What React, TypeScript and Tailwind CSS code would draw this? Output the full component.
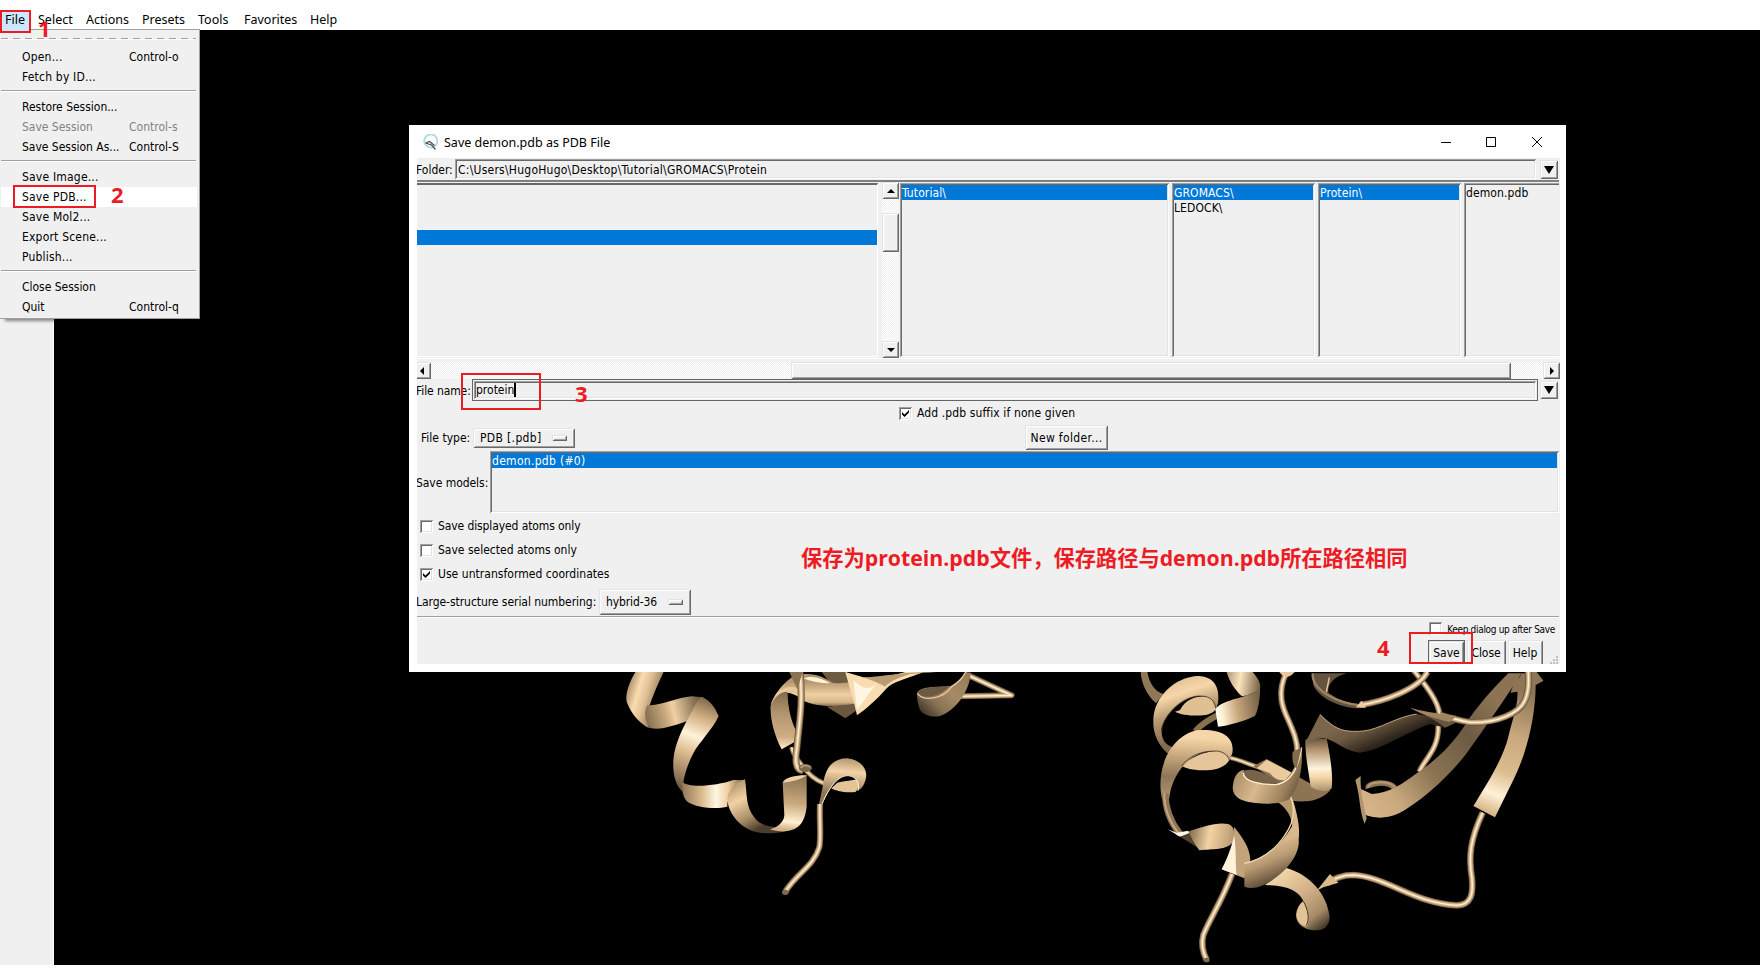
import React from "react";

const sunken = "shadow-[inset_1px_1px_#a0a0a0,inset_-1px_-1px_#ffffff,inset_2px_2px_#696969,inset_-2px_-2px_#e3e3e3]";
const raised = "shadow-[inset_1px_1px_#e3e3e3,inset_-1px_-1px_#696969,inset_2px_2px_#ffffff,inset_-2px_-2px_#a0a0a0]";
const trough = "bg-[repeating-conic-gradient(#ffffff_0_25%,#f0f0f0_0_50%)] bg-[length:2px_2px]";

type Entry = { label?: string; key?: string; off?: boolean; hot?: boolean };

const fileMenu: Entry[] = [
  { label: "Open...", key: "Control-o" },
  { label: "Fetch by ID..." },
  {},
  { label: "Restore Session..." },
  { label: "Save Session", key: "Control-s", off: true },
  { label: "Save Session As...", key: "Control-S" },
  {},
  { label: "Save Image..." },
  { label: "Save PDB...", hot: true },
  { label: "Save Mol2..." },
  { label: "Export Scene..." },
  { label: "Publish..." },
  {},
  { label: "Close Session" },
  { label: "Quit", key: "Control-q" },
];

function MenuBar() {
  return (
    <div className="flex h-[30px] bg-white pt-[10px] font-['Noto_Sans','Noto_Sans_CJK_SC',sans-serif] text-[12.5px] leading-[19px]">
      <div className="w-[38px]" />
      <div className="w-[48px]">Select</div>
      <div className="w-[56px]">Actions</div>
      <div className="w-[56px]">Presets</div>
      <div className="w-[46px]">Tools</div>
      <div className="w-[66px]">Favorites</div>
      <div>Help</div>
    </div>
  );
}

function FileMenu() {
  return (
    <div className="absolute left-0 top-[29px] flex h-[290px] w-[200px] flex-col border-r border-b border-t border-[#a0a0a0] bg-[#f0f0f0] shadow-[4px_3px_3px_-1px_rgba(0,0,0,0.45)]">
      <div className="ml-px mt-[8px] h-px w-[195px] bg-[repeating-linear-gradient(90deg,#a0a0a0_0_7px,#f0f0f0_7px_12px)]" />
      <div className="ml-px h-px w-[195px] bg-white" />
      <div className="h-[7px]" />
      {fileMenu.map((e, i) =>
        e.label ? (
          <div
            key={i}
            className={`mx-px flex h-[20px] w-[196px] items-center pl-[21px] ${e.hot ? "bg-white" : ""} ${e.off ? "text-[#838383]" : "text-black"}`}
          >
            <span className={`w-[107px] whitespace-nowrap ${e.label.endsWith("...") && e.label.length < 17 ? "tracking-[0.2px]" : "tracking-[-0.02px]"}`}>
              {e.label}
            </span>
            <span className="whitespace-nowrap">{e.key}</span>
          </div>
        ) : (
          <div key={i} className="ml-px flex h-[10px] w-[195px] items-start pt-[3px]">
            <div className="h-[2px] w-full border-b border-white bg-[#a0a0a0]" />
          </div>
        ),
      )}
    </div>
  );
}

function Arrow({ dir, big }: { dir: "up" | "down" | "left" | "right"; big?: boolean }) {
  const d = {
    up: "M0 6L4 2L8 6Z",
    down: "M0 2L4 6L8 2Z",
    left: "M6 0L2 4L6 8Z",
    right: "M2 0L6 4L2 8Z",
  }[dir];
  return (
    <svg viewBox="0 0 8 8" className={big ? "h-[8px] w-[10px]" : "h-[8px] w-[8px]"} preserveAspectRatio="none">
      <path d={big ? "M0 0H8L4 8Z" : d} fill="#000" />
    </svg>
  );
}

function Check({ on }: { on?: boolean }) {
  return (
    <div className={`flex h-[13px] w-[13px] shrink-0 items-center justify-center bg-white ${sunken}`}>
      {on && (
        <svg viewBox="0 0 7 7" className="h-[7px] w-[7px]">
          <path d="M0 2L2.5 4.5L7 0V2.6L2.5 7L0 4.6Z" fill="#000" />
        </svg>
      )}
    </div>
  );
}

function MenuMark() {
  return <div className={`h-[6px] w-[15px] shrink-0 bg-[#f0f0f0] ${raised}`} />;
}

function List({ items, width, sel }: { items: string[]; width: string; sel?: number }) {
  return (
    <div className={`h-[174px] shrink-0 p-[2px] ${sunken} ${width}`}>
      {items.map((t, i) => (
        <div key={t} className={`h-[15px] leading-[16px] tracking-[0.1px] ${sel === i ? "bg-[#0078d7] text-white" : ""}`}>
          {t}
        </div>
      ))}
    </div>
  );
}

function SaveDialog() {
  return (
    <div className="absolute left-[409px] top-[125px] flex h-[547px] w-[1157px] flex-col bg-white">
      <div className="flex h-[33px] shrink-0 items-center pl-[14px] pr-[23px]">
        <svg viewBox="0 0 16 16" className="h-[16px] w-[16px]" fill="none">
          <circle cx="7.800" cy="7" r="6.600" stroke="#b3d7e8" strokeWidth="1.900" />
          <path d="M2.500 9L6.500 7.500L11.500 11.500M2.500 9L8.500 11L12.500 15.500" stroke="#4a4a4a" strokeWidth="1.200" />
        </svg>
        <span className="ml-[5px] mt-[2px] whitespace-nowrap font-['Noto_Sans','Noto_Sans_CJK_SC',sans-serif] text-[12.5px]">Save demon.pdb as PDB File</span>
        <svg viewBox="0 0 102 12" className="ml-auto h-[12px] w-[102px]" fill="none" stroke="#000">
          <path d="M0 6.5H10M45.500 1.500H54.500V10.500H45.500ZM91 1L101 11M101 1L91 11" />
        </svg>
      </div>
      <div className="ml-[8px] flex h-[506px] w-[1143px] flex-col overflow-hidden bg-[#f0f0f0]">
        <div className="flex h-[22px] shrink-0 items-start pt-px">
          <span className="-ml-px w-[39px] shrink-0 leading-[22px]">Folder:</span>
          <div className={`h-[20px] w-[1081px] pl-[3px] leading-[22px] ${sunken}`}>
            <span className="tracking-[0.24px]">C:\Users\HugoHugo\Desktop\Tutorial\GROMACS\Protein</span>
          </div>
          <div className={`ml-[4px] mt-px flex h-[19px] w-[18px] shrink-0 items-center justify-center ${raised}`}>
            <Arrow dir="down" big />
          </div>
        </div>
        <div className="flex h-[179px] w-[1142px] shrink-0 overflow-hidden border-b border-t-2 border-b-white border-t-[#808080] pt-px">
          <div className="h-[174px] w-[461px] shrink-0 border-b border-t-2 border-r border-b-white border-r-white border-t-[#696969] pt-[45px]">
            <div className="h-[15px] w-[460px] bg-[#0078d7]" />
          </div>
          <div className={`ml-[4px] flex h-[175px] w-[17px] shrink-0 flex-col ${trough}`}>
            <div className={`-mt-px flex h-[17px] items-center justify-center bg-[#f0f0f0] ${raised}`}><Arrow dir="up" /></div>
            <div className={`mt-[14px] h-[39px] bg-[#f0f0f0] ${raised}`} />
            <div className={`mt-auto flex h-[17px] items-center justify-center bg-[#f0f0f0] ${raised}`}><Arrow dir="down" /></div>
          </div>
          <div className="ml-px flex shrink-0 gap-[3px]">
            <List width="w-[269px]" items={["Tutorial\\"]} sel={0} />
            <List width="w-[143px]" items={["GROMACS\\", "LEDOCK\\"]} sel={0} />
            <List width="w-[143px]" items={["Protein\\"]} sel={0} />
            <List width="w-[110px]" items={["demon.pdb"]} />
          </div>
        </div>
        <div className={`mt-[3px] flex h-[17px] shrink-0 ${trough}`}>
          <div className={`-ml-[3px] flex h-[17px] w-[17px] shrink-0 items-center justify-center bg-[#f0f0f0] pr-px ${raised}`}><Arrow dir="left" /></div>
          <div className={`ml-[360px] h-[17px] w-[720px] bg-[#f0f0f0] ${raised}`} />
          <div className={`ml-auto flex h-[17px] w-[17px] items-center justify-center bg-[#f0f0f0] ${raised}`}><Arrow dir="right" /></div>
        </div>
        <div className="flex h-[22px] shrink-0">
          <span className="-ml-px w-[56px] shrink-0 whitespace-nowrap leading-[24px] tracking-[-0.1px]">File name:</span>
          <div className="h-[22px] w-[1066px] border border-[#646464] p-px">
            <div className={`flex h-[18px] items-center pl-[2px] ${sunken}`}>
              <span className="pt-px">protein</span>
              <div className="h-[14px] w-[2px] bg-black" />
            </div>
          </div>
          <div className={`ml-[2px] mt-[2px] flex h-[18px] w-[18px] shrink-0 items-center justify-center ${raised}`}>
            <Arrow dir="down" big />
          </div>
        </div>
        <div className="flex h-[24px] shrink-0 items-center pl-[482px]">
          <Check on />
          <span className="ml-[5px] pt-px tracking-[0.11px]">Add .pdb suffix if none given</span>
        </div>
        <div className="flex h-[25px] shrink-0 items-center pl-[4px]">
          <span className="w-[52px] whitespace-nowrap pt-px">File type:</span>
          <div className={`flex h-[20px] w-[102px] items-center justify-between pl-[7px] pr-[8px] ${raised}`}>
            <span className="pt-px tracking-[0.35px]">PDB [.pdb]</span>
            <MenuMark />
          </div>
          <div className={`ml-[450px] flex h-[25px] w-[83px] items-center justify-center pt-[2px] tracking-[0.35px] ${raised}`}>New folder...</div>
        </div>
        <div className="mt-px flex h-[62px] shrink-0 items-center">
          <span className="-ml-px w-[74px] shrink-0 whitespace-nowrap pt-[2px] tracking-[-0.05px]">Save models:</span>
          <div className={`h-[62px] w-[1069px] p-[2px] ${sunken}`}>
            <div className="h-[15px] bg-[#0078d7] leading-[16px] tracking-[0.3px] text-white">demon.pdb (#0)</div>
          </div>
        </div>
        <div className="flex h-[75px] shrink-0 flex-col pl-[3px] pt-px">
          <div className="flex h-[24px] items-center gap-[5px]"><Check /><span className="tracking-[-0.1px]">Save displayed atoms only</span></div>
          <div className="flex h-[24px] items-center gap-[5px]"><Check /><span>Save selected atoms only</span></div>
          <div className="flex h-[24px] items-center gap-[5px]"><Check on /><span className="pt-px tracking-[0.04px]">Use untransformed coordinates</span></div>
        </div>
        <div className="flex h-[27px] shrink-0 items-center">
          <span className="-ml-px w-[183px] shrink-0 whitespace-nowrap pt-px tracking-[-0.05px]">Large-structure serial numbering:</span>
          <div className={`flex h-[26px] w-[92px] items-center justify-between pl-[7px] pr-[8px] ${raised}`}>
            <span className="pt-px tracking-[-0.1px]">hybrid-36</span>
            <MenuMark />
          </div>
        </div>
        <div className="mt-px h-[2px] w-[1142px] shrink-0 border-b border-white bg-[#a0a0a0]" />
        <div className="flex h-[22px] shrink-0 items-start justify-end pr-[5px] pt-[4px]">
          <Check />
          <span className="ml-[5px] whitespace-nowrap pt-px text-[10px] leading-[14px] tracking-[-0.32px]">Keep dialog up after Save</span>
        </div>
        <div className="flex h-[24px] shrink-0 pl-[1011px]">
          <div className="h-[30px] w-[37px] border border-[#646464]">
            <div className={`flex h-[28px] items-center justify-center pb-[4px] ${raised}`}>Save</div>
          </div>
          <div className={`ml-[2px] flex h-[30px] w-[39px] items-center justify-center pb-[4px] pr-px tracking-[-0.1px] ${raised}`}>Close</div>
          <div className={`ml-[2px] flex h-[30px] w-[35px] items-center justify-center pb-[4px] pr-px ${raised}`}>Help</div>
          <svg viewBox="0 0 8 8" className="ml-[7px] mt-[16px] h-[8px] w-[8px]" fill="#bfbfbf">
            <path d="M6 0h2v2h-2zM3 3h2v2h-2zM6 3h2v2h-2zM0 6h2v2h-2zM3 6h2v2h-2zM6 6h2v2h-2z" />
          </svg>
        </div>
      </div>
    </div>
  );
}

function Coil({ d, w = 18 }: { d: string; w?: number }) {
  return (
    <g fill="none" strokeLinecap="butt" strokeLinejoin="round">
      <path d={d} stroke="#5f4f3b" strokeWidth={w} />
      <path d={d} stroke="#a98c68" strokeWidth={w * 0.8} />
      <path d={d} stroke="#d9b98e" strokeWidth={w * 0.52} />
      <path d={d} stroke="#fff0d6" strokeWidth={w * 0.2} />
    </g>
  );
}

function Grad({ id, a, stops }: { id: string; a: [number, number, number, number]; stops: [number, string][] }) {
  return (
    <linearGradient id={id} gradientUnits="userSpaceOnUse" x1={a[0]} y1={a[1]} x2={a[2]} y2={a[3]}>
      {stops.map(([o, c]) => (
        <stop key={o} offset={o} stopColor={c} />
      ))}
    </linearGradient>
  );
}

function ChainLeft() {
  return (
    <g transform="translate(610 660) scale(0.33333)">
      <defs>
        <Grad id="l1" a={[50, 80, 150, 110]} stops={[[0, "#a68a66"], [0.35, "#fbdcb0"], [0.6, "#e0c094"], [1, "#8d7556"]]} />
        <Grad id="l2" a={[110, 170, 270, 130]} stops={[[0, "#8a7253"], [0.35, "#cbab80"], [0.5, "#f0d0a2"], [1, "#6f5c44"]]} />
        <Grad id="l3" a={[300, 120, 200, 380]} stops={[[0, "#7d684c"], [0.2, "#cfae82"], [0.42, "#fff2d8"], [0.62, "#dcbb8e"], [1, "#6f5b42"]]} />
        <Grad id="l4" a={[210, 400, 390, 400]} stops={[[0, "#8a7253"], [0.35, "#d9b88b"], [0.6, "#fff6e2"], [0.8, "#f0d0a2"], [1, "#917858"]]} />
        <Grad id="l5" a={[370, 380, 440, 510]} stops={[[0, "#bf9f76"], [0.3, "#f2d2a4"], [0.7, "#a98d68"], [1, "#4b3e2e"]]} />
        <Grad id="l6" a={[560, 350, 540, 510]} stops={[[0, "#8d7555"], [0.5, "#c9a97e"], [0.85, "#fff0d2"], [1, "#d3b286"]]} />
        <Grad id="l7" a={[520, 90, 510, 265]} stops={[[0, "#7d6749"], [0.4, "#b29570"], [0.8, "#cfae83"], [1, "#ffe9c6"]]} />
        <Grad id="l8" a={[640, 65, 640, 142]} stops={[[0, "#b4966e"], [0.5, "#f0d0a2"], [0.8, "#d6b58a"], [1, "#6a573f"]]} />
        <Grad id="l9" a={[1070, 40, 940, 170]} stops={[[0, "#947b5b"], [0.4, "#a78b67"], [0.7, "#8a7354"], [1, "#3c3225"]]} />
        <Grad id="l10" a={[700, 290, 690, 400]} stops={[[0, "#ad906b"], [0.4, "#f4d4a7"], [1, "#8f7656"]]} />
      </defs>
      <path d="M80 30C60 60 45 100 50 125C65 165 90 190 118 205C108 180 108 160 116 145C128 108 142 75 160 38V30Z" fill="url(#l1)" />
      <path d="M112 135C150 140 200 112 245 109L280 112C270 140 245 165 230 184C195 195 155 212 120 204C102 185 102 150 112 135Z" fill="url(#l2)" />
      <path d="M275 110C300 120 315 142 326 168C310 205 265 250 250 280C235 310 218 350 218 395C195 375 188 340 190 300C194 250 220 200 245 155C255 135 262 120 275 110Z" fill="url(#l3)" />
      <path d="M218 366C235 385 320 378 370 360L405 360C375 385 350 410 352 440C320 448 260 444 232 425C218 412 214 385 218 366Z" fill="url(#l4)" />
      <path d="M405 358C412 400 405 440 435 475C450 495 485 505 515 500L560 498C540 518 480 524 440 517C395 507 350 460 352 410C358 390 380 365 405 358Z" fill="url(#l5)" />
      <path d="M518 368C530 355 575 345 590 346V440C586 475 575 492 562 502C545 516 510 518 480 508C510 500 523 480 523 465Z" fill="url(#l6)" />
      <path d="M518 368C525 352 560 345 590 346C575 358 545 366 518 368Z" fill="#f0d1a5" />
      <path d="M635 36H710L725 75H665Z" fill="#6e5b43" />
      <path d="M555 45C610 35 640 50 668 68C690 72 705 68 720 66L735 132C700 142 620 142 580 122C535 85 500 90 482 150C480 120 510 75 555 45Z" fill="url(#l8)" />
      <path d="M580 55C610 45 635 55 660 69C635 72 605 65 580 55Z" fill="#fff1d6" />
      <path d="M482 140C485 110 510 92 533 97C532 140 545 190 560 215L555 245L515 268C495 230 480 180 482 140Z" fill="url(#l7)" />
      <path d="M482 140C490 105 535 75 575 103L578 95C545 62 490 90 482 140Z" fill="#e9ca9c" />
      <path d="M650 140L735 132L742 150L706 175Z" fill="#6a5740" />
      <path d="M706 36L760 52C800 55 860 45 885 36H940C880 60 850 65 830 85C800 120 765 150 741 166L728 112L718 80Z" fill="#f9dcb1" />
      <path d="M730 60C760 90 780 90 800 70L741 150Z" fill="#fff6e4" />
      <path d="M760 52C830 50 860 36 980 36L900 42C860 55 840 65 825 80C800 65 780 60 760 52Z" fill="#b99b74" />
      <Coil d="M1075 46L1205 106L1040 109" w={18} />
      <path d="M922 96C940 75 1000 82 1022 78C1040 68 1060 50 1067 36L1082 38C1080 90 1040 150 990 168C965 174 935 165 928 145C922 125 920 110 922 96Z" fill="url(#l9)" />
      <path d="M924 96C945 78 990 80 1018 80C990 108 940 122 924 96Z" fill="#6d5a43" />
      <path d="M922 100C940 125 1000 118 1025 80C1050 65 1060 50 1067 36" stroke="#e9c99b" strokeWidth="4" fill="none" />
      <Coil d="M545 262C550 290 565 300 575 315C600 350 620 362 642 370" w={15} />
      <Coil d="M570 36C580 130 566 200 561 262C555 300 555 330 578 332" w={21} />
      <ellipse cx="586" cy="324" rx="20" ry="12" fill="#7d684c" />
      <path d="M572 324C578 314 596 316 600 322" stroke="#c7a77c" strokeWidth="4" fill="none" />
      <path d="M538 36H578L562 88Z" fill="#8a7253" />
      <path d="M638 380C645 320 670 295 712 295C755 300 775 330 767 358C762 380 750 390 742 392C750 365 735 345 708 347C675 350 652 400 634 438H626Z" fill="url(#l10)" />
      <path d="M682 368C705 362 730 362 742 358C748 375 745 390 736 396C705 400 675 392 664 385Z" fill="#e3c497" />
      <path d="M634 438C650 395 680 345 715 347C740 350 750 370 744 392" stroke="#fff0d3" strokeWidth="3" fill="none" />
      <Coil d="M630 432C628 490 634 530 628 562C610 620 560 640 526 695" w={19} />
      <ellipse cx="526" cy="697" rx="10" ry="8" fill="#7f6a4f" />
    </g>
  );
}

function ChainRight() {
  return (
    <g transform="translate(1120 660) scale(0.33333)">
      <defs>
        <Grad id="r1" a={[120, 60, 180, 240]} stops={[[0, "#dcbb8e"], [0.3, "#f7d7a9"], [0.6, "#b89a73"], [1, "#806b4e"]]} />
        <Grad id="r2" a={[160, 230, 150, 400]} stops={[[0, "#f6d6a8"], [0.35, "#c5a57b"], [0.7, "#8e7658"], [1, "#a98c67"]]} />
        <Grad id="r3" a={[290, 40, 420, 60]} stops={[[0, "#7a654a"], [0.55, "#fbe3bd"], [1, "#7d674b"]]} />
        <Grad id="r4" a={[285, 150, 415, 130]} stops={[[0, "#ffffff"], [0.15, "#fff0d4"], [0.5, "#c8a87d"], [1, "#7a664b"]]} />
        <Grad id="r5" a={[340, 340, 520, 420]} stops={[[0, "#a88b66"], [0.4, "#d9b98d"], [0.8, "#a0845f"], [1, "#6b5840"]]} />
        <Grad id="r6" a={[600, 230, 605, 420]} stops={[[0, "#5d4c38"], [0.2, "#b1936d"], [0.5, "#fff4dc"], [0.65, "#f3d3a6"], [1, "#77634a"]]} />
        <Grad id="r7" a={[680, 190, 720, 280]} stops={[[0, "#7a664b"], [0.4, "#6c5941"], [1, "#2d251b"]]} />
        <Grad id="r8" a={[720, 440, 1130, 130]} stops={[[0, "#d7b68a"], [0.2, "#c8a87d"], [0.45, "#8c7454"], [0.75, "#6e5b43"], [1, "#8b7353"]]} />
        <Grad id="r9" a={[1230, 100, 1090, 450]} stops={[[0, "#8d7556"], [0.35, "#c7a77c"], [0.65, "#dcbb8e"], [0.85, "#fff2d8"], [1, "#d9b88b"]]} />
        <Grad id="r10" a={[210, 530, 370, 560]} stops={[[0, "#8c7455"], [0.35, "#f3d3a5"], [0.7, "#c6a67b"], [1, "#866f51"]]} />
        <Grad id="r11" a={[440, 560, 480, 660]} stops={[[0, "#d8b88c"], [0.4, "#b89a72"], [1, "#5c4b37"]]} />
        <Grad id="r12" a={[480, 630, 610, 800]} stops={[[0, "#f6d8ac"], [0.45, "#d2b186"], [0.8, "#a88c67"], [1, "#4c3e2d"]]} />
      </defs>
      <path d="M62 36H82C88 70 105 95 130 102L108 130C80 105 64 70 62 36Z" fill="#8f7758" />
      <path d="M180 150C200 110 240 105 280 110C300 140 290 160 250 166C215 168 185 165 165 155Z" fill="#dfc093" />
      <path d="M100 180C102 110 165 50 235 48C285 50 300 85 294 130L286 150C280 115 265 106 235 108C180 112 120 180 125 215C125 240 140 260 165 262L150 285C115 260 98 220 100 180Z" fill="url(#r1)" />
      <path d="M294 165C265 180 240 195 226 214" stroke="#88704f" strokeWidth="18" fill="none" />
      <path d="M185 318C220 285 260 272 305 272L332 292C320 325 280 332 245 331C220 330 195 325 185 318Z" fill="#e5c599" />
      <path d="M122 390C115 300 165 225 230 211C305 205 345 230 337 280L328 300C315 280 300 273 270 274C205 280 155 345 148 414H125Z" fill="url(#r2)" />
      <path d="M125 215C125 175 180 108 240 108C275 108 284 125 288 145M185 318C205 290 240 272 290 273C315 275 325 290 328 300" stroke="#43372a" strokeWidth="2.500" fill="none" />
      <path d="M320 36H398C420 60 425 80 418 92C390 100 385 108 365 108C345 90 328 65 320 36Z" fill="url(#r3)" />
      <path d="M286 148C310 115 390 115 420 85C420 120 415 150 405 168C370 185 325 197 294 200Z" fill="url(#r4)" />
      <Coil d="M498 40C470 100 488 145 505 180C520 215 532 240 532 275" w={19} />
      <path d="M478 36H524C510 55 490 55 478 36Z" fill="#e8c89b" />
      <Coil d="M332 294C365 300 385 315 430 325" w={14} />
      <path d="M400 318L440 297L520 340C570 375 605 385 632 390C600 425 555 428 515 422L470 365Z" fill="#8b7354" />
      <path d="M410 325L440 299L522 342C500 370 470 365 450 340Z" fill="#ebcb9e" />
      <Coil d="M880 30C930 90 975 150 955 200C955 270 915 295 898 335" w={18} />
      <path d="M556 240C570 225 610 240 620 235C630 285 640 345 635 385C620 400 585 390 572 380C565 330 555 285 556 240Z" fill="url(#r6)" />
      <path d="M600 162C645 205 665 218 730 213C780 208 830 170 890 162L970 178L975 203L930 192C850 220 780 272 720 278C680 275 650 245 620 236C600 230 575 238 556 248Z" fill="url(#r7)" />
      <path d="M600 164C645 207 665 218 730 213C780 208 830 170 890 162" stroke="#c2a37a" strokeWidth="3" fill="none" />
      <path d="M745 385C740 368 805 360 825 385" stroke="#8d7556" strokeWidth="17" fill="none" />
      <path d="M745 383C740 366 805 358 825 383" stroke="#b89a72" strokeWidth="6" fill="none" />
      <path d="M1165 40H1205C1160 110 1090 210 1040 280C970 370 880 440 830 463C790 480 750 472 732 462L718 385L755 402C810 400 850 370 890 340C950 300 1000 250 1035 195C1070 140 1120 85 1165 40Z" fill="url(#r8)" />
      <path d="M706 360L722 348C720 390 730 430 740 475L734 491C718 455 722 415 706 360Z" fill="#b29570" />
      <path d="M576 40H680C640 50 622 75 625 98C665 128 700 130 740 135L720 145C650 145 590 105 580 75Z" fill="#655440" />
      <path d="M578 40C575 95 660 130 720 136" stroke="#a0845f" strokeWidth="7" fill="none" />
      <Coil d="M720 135C790 125 895 88 922 36" w={20} />
      <path d="M708 142L725 122L738 143Z" fill="#edcda0" />
      <path d="M628 52L619 96" stroke="#eacb9e" strokeWidth="4" />
      <path d="M1185 60L1230 36H1250L1270 62L1247 75C1247 170 1220 280 1180 360L1125 472L1060 438C1115 350 1150 290 1165 230C1180 170 1195 130 1192 95L1172 98Z" fill="url(#r9)" />
      <path d="M1172 98L1205 40H1250L1270 62L1235 80Z" fill="#8d7556" />
      <path d="M870 143C930 165 990 160 1030 178L975 203C950 180 910 165 870 143Z" fill="#67553f" />
      <Coil d="M960 165C990 174 1010 180 1050 187C1130 190 1200 160 1215 120C1230 90 1225 60 1225 36" w={20} />
      <path d="M870 143C930 160 970 160 1010 168L990 186C940 175 900 160 870 143Z" fill="#a0845f" />
      <Coil d="M1088 458C1050 540 1045 590 1056 655C1060 700 1055 735 1010 736C880 730 800 650 700 645C665 645 645 655 620 670" w={20} />
      <path d="M590 692L630 642L655 668L610 682Z" fill="#dbba8e" />
      <path d="M136 400C135 450 155 490 180 522" stroke="#8d7556" strokeWidth="20" fill="none" />
      <path d="M133 400C132 450 152 490 177 522" stroke="#c7a77c" strokeWidth="6" fill="none" />
      <path d="M143 508L170 518L205 512L210 525L180 530Z" fill="#fff8ea" />
      <path d="M180 530L210 518L245 570Z" fill="#4f4231" />
      <path d="M205 514C250 500 290 485 325 492C345 500 345 520 340 545C320 572 280 565 238 571C225 555 215 535 205 514Z" fill="url(#r10)" />
      <path d="M342 500C365 530 390 560 391 600L373 655L305 628C330 590 345 540 342 500Z" fill="#c3a47a" />
      <path d="M305 628C325 590 338 550 342 525C350 570 345 610 350 645Z" fill="#fff3dc" />
      <path d="M470 425L512 405C535 450 535 500 522 540L515 490C515 465 490 435 470 425Z" fill="#b6986f" />
      <path d="M435 675L500 624C570 645 620 700 629 770C628 800 610 812 580 811C550 808 528 790 528 765C530 745 540 730 550 723C535 690 500 677 435 675Z" fill="url(#r12)" />
      <path d="M550 724C565 750 572 780 560 800C525 795 520 750 550 724Z" fill="#e3c396" />
      <path d="M550 724C565 750 570 780 558 797" stroke="#3a3024" strokeWidth="3" fill="none" />
      <path d="M512 405C525 440 525 480 515 500C480 560 430 600 373 608V680C400 690 430 678 455 662C505 630 540 580 536 540C540 500 535 470 512 405Z" fill="url(#r11)" />
      <path d="M510 405C530 450 520 490 495 525C465 570 425 600 373 610" stroke="#f8dcb1" strokeWidth="4" fill="none" />
      <path d="M340 370C342 350 355 330 372 330C365 355 400 370 450 374C490 376 520 350 545 262C550 330 535 390 505 420C470 435 400 435 360 418C340 405 335 390 340 370Z" fill="url(#r5)" />
      <path d="M372 332C400 322 440 340 482 368C440 380 365 365 372 332Z" fill="#79644a" />
      <path d="M370 338C370 365 425 375 465 374C510 370 535 325 545 262" stroke="#fff0d2" strokeWidth="4" fill="none" />
      <path d="M545 262L518 275C515 300 520 320 530 325Z" fill="#836c4e" />
      <Coil d="M336 642C305 725 270 775 250 825C242 855 250 880 260 900" w={20} />
      <ellipse cx="260" cy="900" rx="9" ry="7" fill="#7f6a4f" />
    </g>
  );
}

const num = "absolute font-['Open_Sans','Noto_Sans_CJK_SC',sans-serif] text-[22px] font-bold leading-[22px] text-[#ed1c24] [font-stretch:normal]";

export default function App() {
  return (
    <div className="relative h-[968px] w-[1760px] overflow-hidden bg-white font-['DejaVu_Sans_Condensed','DejaVu_Sans',sans-serif] text-[12px] leading-[15px] text-black [font-stretch:condensed]">
      <MenuBar />
      <div className="flex h-[935px]">
        <div className="w-[54px] border-r border-white bg-[#f0f0f0]" />
        <div className="grow bg-black">
          <svg viewBox="54 30 1706 935" className="block h-[935px] w-[1706px]">
            <ChainLeft />
            <ChainRight />
          </svg>
        </div>
      </div>
      <SaveDialog />
      <FileMenu />
      <div className="absolute left-0 top-[10px] h-[23px] w-[31px] border-2 border-[#ed1c24] bg-[#cce8ff] pl-[3px] font-['Noto_Sans',sans-serif] text-[12.5px] leading-[16px]">File</div>
      <div className={`${num} left-[38px] top-[17px]`}>1</div>
      <div className="absolute left-[13px] top-[185px] h-[23px] w-[83px] border-2 border-[#ed1c24]" />
      <div className={`${num} left-[111px] top-[183px]`}>2</div>
      <div className="absolute left-[461px] top-[373px] h-[37px] w-[80px] border-2 border-[#ed1c24]" />
      <div className={`${num} left-[575px] top-[382px]`}>3</div>
      <div className="absolute left-[1409px] top-[632px] h-[32px] w-[64px] border-2 border-[#ed1c24]" />
      <div className={`${num} left-[1377px] top-[636px]`}>4</div>
      <div className="absolute left-[801px] top-[544px] whitespace-nowrap font-['Open_Sans','Noto_Sans_CJK_SC',sans-serif] text-[21.25px] font-bold leading-[28px] text-[#ed1c24] [font-stretch:normal]">
        保存为protein.pdb文件，保存路径与demon.pdb所在路径相同
      </div>
    </div>
  );
}
